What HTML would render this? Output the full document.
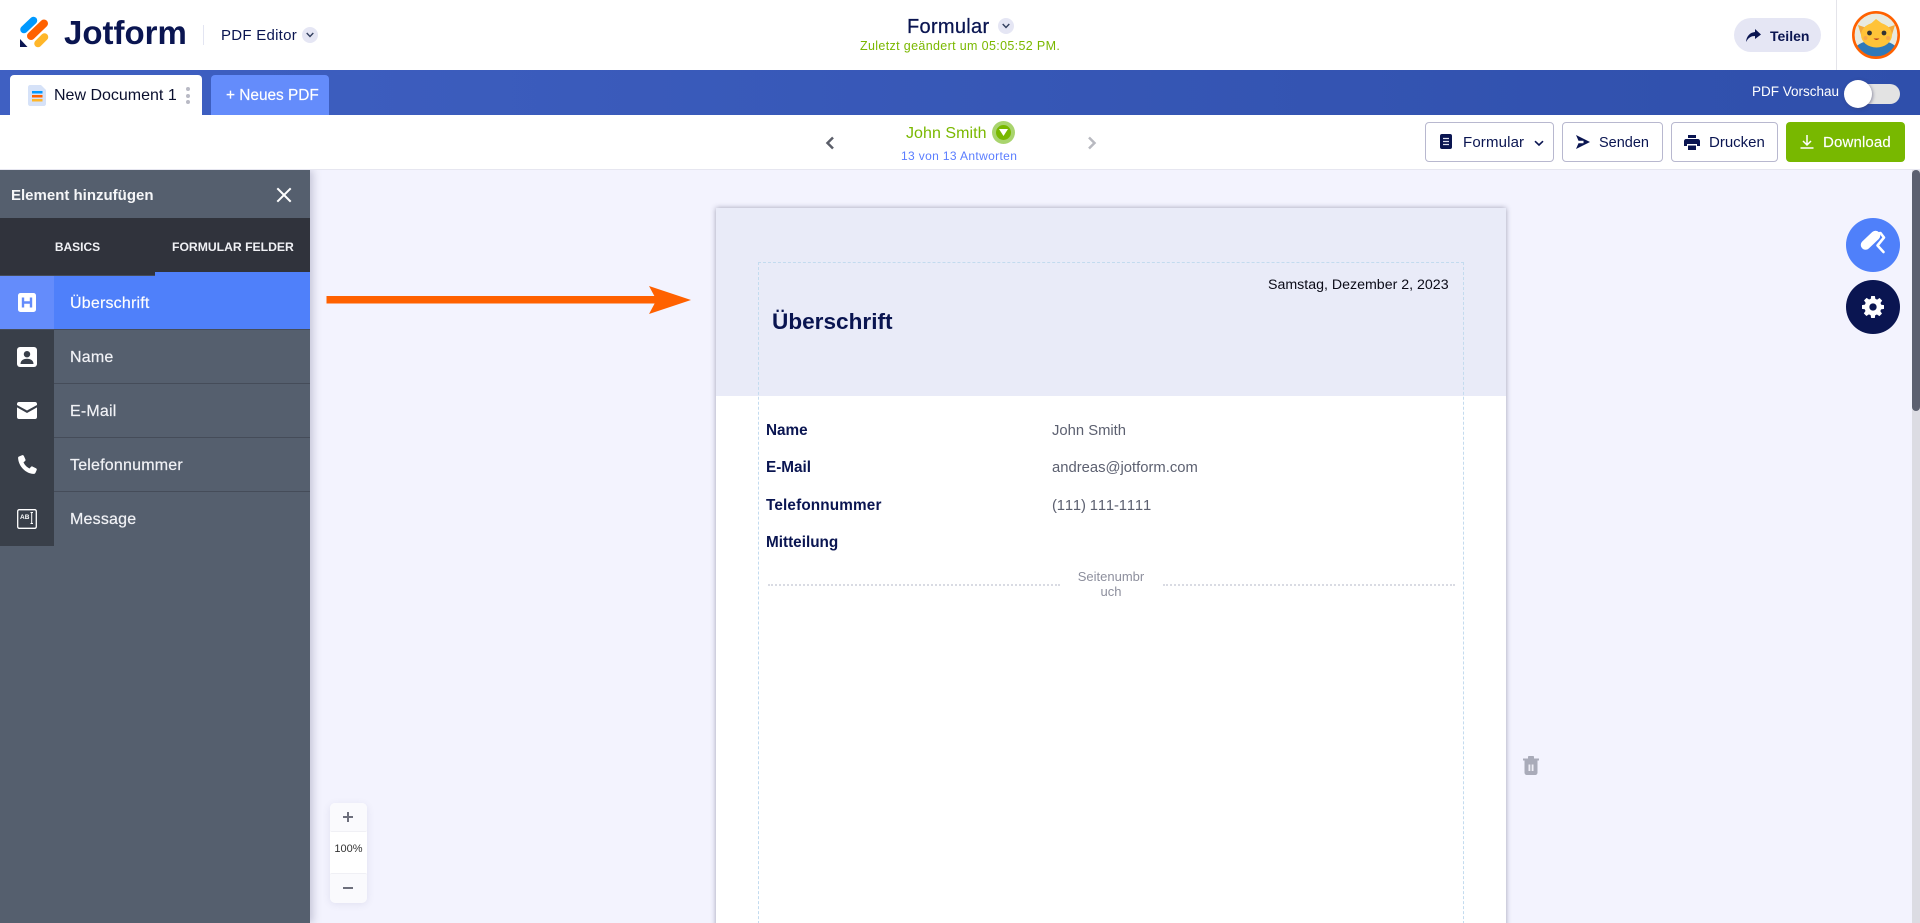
<!DOCTYPE html>
<html lang="de"><head><meta charset="utf-8"><title>Jotform PDF Editor</title>
<style>
html,body{margin:0;padding:0;width:1920px;height:923px;overflow:hidden;background:#f3f3fe;font-family:"Liberation Sans",sans-serif}
#w{position:relative;width:1920px;height:923px;overflow:hidden;background:#f3f3fe}
.a{position:absolute;white-space:nowrap}
.t{position:absolute;white-space:nowrap;line-height:20px;height:20px}
svg{position:absolute;overflow:visible}
.btn{position:absolute;top:122px;height:38px;border:1px solid #b8b8cf;border-radius:4px;background:#fff}
.row{position:absolute;left:0;width:310px;height:53px;background:#555f6e;border-bottom:1px solid #454c59}
.ic{position:absolute;left:0;top:0;width:54px;height:54px;background:#393f49}
.row .t{left:70px;top:18px;font-size:16px;color:#f1f2f6;letter-spacing:.2px;-webkit-text-stroke:.2px #f1f2f6}
.lb{left:766px;font-size:15.3px;font-weight:700;color:#0a1551}
.vl{left:1052px;font-size:14.8px;color:#5c6070}
</style></head><body><div id="w">
<!-- page -->
<div class="a" style="left:716px;top:208px;width:790px;height:730px;background:#fff;box-shadow:0 0 5px rgba(60,60,90,.45)"></div>
<div class="a" style="left:716px;top:208px;width:790px;height:188px;background:#e9ebf8"></div>
<div class="a" style="left:758px;top:262px;width:704px;height:700px;border:1px dashed #c3dbef"></div>
<div class="t" style="left:1268px;top:275px;font-size:14.2px;color:#0b0b18">Samstag, Dezember 2, 2023</div>
<div class="t" style="left:772px;top:311px;font-size:22.6px;font-weight:700;color:#0a1551;line-height:22px">Überschrift</div>
<div class="t lb" style="top:421px">Name</div><div class="t vl" style="top:421px">John Smith</div>
<div class="t lb" style="top:458px">E-Mail</div><div class="t vl" style="top:458px">andreas@jotform.com</div>
<div class="t lb" style="top:496px;letter-spacing:.15px">Telefonnummer</div><div class="t vl" style="top:496px;font-kerning:none;letter-spacing:-.15px">(111) 111-1111</div>
<div class="t lb" style="top:533px">Mitteilung</div>
<div class="a" style="left:768px;top:584px;width:292px;border-top:2px dotted #d9dbe3"></div>
<div class="a" style="left:1163px;top:584px;width:292px;border-top:2px dotted #d9dbe3"></div>
<div class="t" style="left:1061px;width:100px;top:567px;text-align:center;font-size:13px;color:#8d8f9d">Seitenumbr</div>
<div class="t" style="left:1061px;width:100px;top:582px;text-align:center;font-size:13px;color:#8d8f9d">uch</div>
<!-- arrow -->
<svg style="left:326px;top:285px" width="366" height="30" viewBox="0 0 366 30"><rect x="0.5" y="11" width="330" height="7.5" fill="#ff6100"/><path d="M323 1L365 15L323 29L330.500 15Z" fill="#ff6100"/></svg>
<!-- trash -->
<svg style="left:1523px;top:756px" width="16" height="19" viewBox="0 0 16 19"><path d="M0 2.500H5V.8C5 .3 5.500 0 6 0H10C10.500 0 11 .3 11 .8V2.500H16V4.500H0Z" fill="#a9abb9"/><path d="M1.500 4.500H14.500V16.500C14.500 18 13.500 19 12 19H4C2.500 19 1.500 18 1.500 16.500Z" fill="#a9abb9"/><rect x="5.500" y="8.500" width="1.800" height="6.500" fill="#eeeef6"/><rect x="8.700" y="8.500" width="1.800" height="6.500" fill="#eeeef6"/></svg>
<!-- fabs -->
<div class="a" style="left:1846px;top:218px;width:54px;height:54px;border-radius:50%;background:#4f80fa"></div>
<svg style="left:0;top:0" width="1920" height="923" viewBox="0 0 1920 923"><path d="M1865.500 245L1875.500 235.500" stroke="#fff" stroke-width="9.500" stroke-linecap="round"/><path d="M1878 233.500L1880.500 233L1884 237.500L1877.500 245.500L1883.500 252" fill="none" stroke="#fff" stroke-width="2.600" stroke-linecap="round" stroke-linejoin="round"/></svg>
<div class="a" style="left:1846px;top:280px;width:54px;height:54px;border-radius:50%;background:#0a1551"></div>
<svg style="left:1862px;top:296px" width="22" height="22" viewBox="0 0 24 24"><path fill="#fff" fill-rule="evenodd" d="M10 0h4l.6 3.200 1.900.8 2.700-1.800 2.800 2.800-1.800 2.700.8 1.900L24 10v4l-3.200.6-.8 1.900 1.800 2.700-2.800 2.800-2.700-1.800-1.900.8L14 24h-4l-.6-3.200-1.900-.8-2.700 1.800-2.800-2.800 1.800-2.700-.8-1.900L0 14v-4l3.200-.6.8-1.900-1.800-2.700 2.800-2.800 2.700 1.800 1.900-.8zM12 8a4 4 0 1 0 0 8 4 4 0 0 0 0-8z"/></svg>
<!-- scrollbar -->
<div class="a" style="left:1912px;top:170px;width:8px;height:753px;background:#dcdce3"></div>
<div class="a" style="left:1912px;top:170px;width:8px;height:241px;background:#5c6070;border-radius:4px"></div>
<!-- zoom -->
<div class="a" style="left:330px;top:803px;width:37px;height:99px;background:#fff;border-radius:5px;box-shadow:0 2px 8px rgba(80,80,130,.12)"></div>
<div class="a" style="left:330px;top:803px;width:37px;height:28px;background:#fafafd;border-radius:5px 5px 2px 2px;border-bottom:1px solid #f0f0f5"></div>
<div class="a" style="left:330px;top:873px;width:37px;height:29px;background:#fafafd;border-radius:2px 2px 5px 5px;border-top:1px solid #f0f0f5"></div>
<div class="a" style="left:343px;top:816px;width:10px;height:2px;background:#6d6f7c"></div><div class="a" style="left:347px;top:812px;width:2px;height:10px;background:#6d6f7c"></div>
<div class="a" style="left:343px;top:887px;width:10px;height:2px;background:#6d6f7c"></div>
<div class="t" style="left:330px;width:37px;top:839px;text-align:center;font-size:11px;color:#333">100%</div>
<!-- sidebar -->
<div class="a" style="left:0;top:170px;width:310px;height:753px;background:#555f6e;box-shadow:3px 0 8px rgba(60,60,100,.25)"></div>
<div class="t" style="left:11px;top:186px;font-size:15px;font-weight:700;color:#f5f6f8">Element hinzufügen</div>
<svg style="left:277px;top:188px" width="14" height="14" viewBox="0 0 14 14"><path d="M1 1L13 13M13 1L1 13" stroke="#fff" stroke-width="2" stroke-linecap="square"/></svg>
<div class="a" style="left:0;top:218px;width:310px;height:54px;background:#30333c"></div>
<div class="a" style="left:0;top:272px;width:155px;height:4px;background:#30333c;border-bottom:1px solid #454c59;box-sizing:border-box"></div>
<div class="a" style="left:155px;top:272px;width:155px;height:4px;background:#4f80fa"></div>
<div class="t" style="left:0;width:155px;top:237px;text-align:center;font-size:12px;font-weight:700;color:#f0f1f5">BASICS</div>
<div class="t" style="left:172px;top:237px;font-size:12.2px;font-weight:700;color:#f0f1f5">FORMULAR FELDER</div>
<div class="row" style="top:276px;background:#4f80fa"><div class="ic" style="background:#648cfb;height:53px"></div><div class="t" style="color:#fff">Überschrift</div>
<svg style="left:18px;top:17px" width="18" height="19" viewBox="0 0 18 19"><rect width="18" height="19" rx="2.500" fill="#fff"/><path d="M5 4.500V14.500M13 4.500V14.500M5 9.500H13" stroke="#648cfb" stroke-width="2.400" fill="none"/></svg></div>
<div class="row" style="top:330px"><div class="ic"></div><div class="t">Name</div>
<svg style="left:17px;top:17px" width="20" height="20" viewBox="0 0 20 20"><rect width="20" height="20" rx="3" fill="#fff"/><circle cx="10" cy="7.200" r="3.200" fill="#393f49"/><path d="M3.500 17C3.500 13.200 7 11.800 10 11.800S16.500 13.200 16.500 17Z" fill="#393f49"/></svg></div>
<div class="row" style="top:384px"><div class="ic"></div><div class="t">E-Mail</div>
<svg style="left:17px;top:18px" width="20" height="17" viewBox="0 0 20 17"><path d="M2 0H18C19.200 0 20 .8 20 2V3L10 8.500L0 3V2C0 .8.8 0 2 0Z" fill="#fff"/><path d="M0 5.400L10 11L20 5.400V15C20 16.200 19.200 17 18 17H2C.8 17 0 16.200 0 15Z" fill="#fff"/></svg></div>
<div class="row" style="top:438px"><div class="ic"></div><div class="t">Telefonnummer</div>
<svg style="left:18px;top:17px" width="19" height="19" viewBox="0 0 19 19"><path d="M1 1.500L4 0.300C4.800 0 5.500 .3 5.900 1L7.400 4.400C7.700 5 7.500 5.700 7 6.100L5.500 7.300C6.500 9.800 8.700 12.200 11.500 13.500L12.900 11.900C13.300 11.400 14 11.300 14.600 11.600L18 13.200C18.700 13.600 19 14.300 18.700 15L17.500 17.700C17.100 18.600 16.300 19 15.300 18.900C7.500 18.300 .7 11.300 .1 3.200C0 2.400 .3 1.800 1 1.500Z" fill="#fff"/></svg></div>
<div class="row" style="top:492px;border-bottom:0;height:54px"><div class="ic"></div><div class="t">Message</div>
<svg style="left:17px;top:17px" width="20" height="20" viewBox="0 0 20 20"><rect x=".7" y=".7" width="18.600" height="18.600" rx="1.500" fill="none" stroke="#fff" stroke-width="1.300"/><text x="3" y="10" font-size="6.500" font-weight="700" fill="#fff" font-family="Liberation Sans">AB</text><path d="M13.500 3.500H16M14.700 3.500V14.500M13.500 14.500H16" stroke="#fff" stroke-width="1"/></svg></div>
<!-- header -->
<div class="a" style="left:0;top:0;width:1920px;height:70px;background:#fff"></div>
<svg style="left:0;top:0" width="60" height="60" viewBox="0 0 60 60"><path d="M24 29.500L33.500 20.500" stroke="#0099ff" stroke-width="7.500" stroke-linecap="round"/><path d="M31 36L44 23.500" stroke="#ff6100" stroke-width="8" stroke-linecap="round"/><path d="M38 43.500L44.500 37" stroke="#ffb629" stroke-width="7.500" stroke-linecap="round"/><path d="M20 39L27.500 47H20Z" fill="#0a1551"/></svg>
<div class="t" style="left:64px;top:18px;height:30px;line-height:30px;font-size:33px;font-weight:700;color:#0a1551">Jotform</div>
<div class="a" style="left:203px;top:25px;width:1px;height:20px;background:#e3e5f2"></div>
<div class="t" style="left:221px;top:26px;font-size:15px;color:#0a1551;letter-spacing:.26px">PDF Editor</div>
<div class="a" style="left:302px;top:27px;width:16px;height:16px;border-radius:50%;background:#e5e6f4"></div>
<svg style="left:306px;top:32px" width="8" height="6" viewBox="0 0 8 6"><path d="M.7 1L4 4.500L7.300 1" fill="none" stroke="#33405f" stroke-width="1.400"/></svg>
<div class="t" style="left:907px;top:17px;font-size:20px;color:#0a1551;letter-spacing:.3px;-webkit-text-stroke:.25px #0a1551">Formular</div>
<div class="a" style="left:998px;top:18px;width:16px;height:16px;border-radius:50%;background:#e5e6f4"></div>
<svg style="left:1002px;top:23px" width="8" height="6" viewBox="0 0 8 6"><path d="M.7 1L4 4.500L7.300 1" fill="none" stroke="#33405f" stroke-width="1.400"/></svg>
<div class="t" style="left:860px;top:36px;font-size:12.500px;color:#7ab800;letter-spacing:.35px">Zuletzt geändert um 05:05:52 PM.</div>
<div class="a" style="left:1734px;top:18px;width:87px;height:34px;border-radius:17px;background:#e5e6f4"></div>
<svg style="left:1746px;top:29px" width="15" height="13" viewBox="0 0 15 13"><path d="M9 0L15 5.500L9 10V7C5 7 2.500 8.500 0 13C.5 7 4 3.500 9 3Z" fill="#0a1551"/></svg>
<div class="t" style="left:1770px;top:26px;font-size:14px;font-weight:700;color:#0a1551">Teilen</div>
<div class="a" style="left:1836px;top:0;width:1px;height:70px;background:#e4e4ea"></div>
<svg style="left:1852px;top:11px" width="48" height="48" viewBox="0 0 48 48"><circle cx="24" cy="24" r="22.500" fill="#e8eadf"/><path d="M4 36C8 31 15 30 24 30S40 31 44 36C40 42.500 32 46 24 46S8 42.500 4 36Z" fill="#2f79b9"/><path d="M6 14L15 17L10 27Z M43 14L34 17L39 27Z" fill="#f2a93a"/><ellipse cx="24.500" cy="24" rx="15.500" ry="12.500" fill="#ffc338"/><path d="M19 12.500L24 8L30 12.500Z" fill="#ffc338"/><circle cx="17.500" cy="22" r="2.400" fill="#333"/><circle cx="32" cy="22" r="2.400" fill="#333"/><circle cx="13.500" cy="27" r="2" fill="#f7a94a"/><circle cx="36" cy="27" r="2" fill="#f7a94a"/><path d="M21.500 27.500Q24.500 30.500 27.500 27.500" fill="#b03020"/><circle cx="24" cy="24" r="22.700" fill="none" stroke="#ff6100" stroke-width="2.600"/></svg>
<!-- tabbar -->
<div class="a" style="left:0;top:70px;width:1920px;height:45px;background:linear-gradient(90deg,#3f60c2,#2f4fab)"></div>
<div class="a" style="left:10px;top:75px;width:192px;height:40px;background:#fff;border-radius:4px 4px 0 0"></div>
<svg style="left:28px;top:85px" width="18" height="21" viewBox="0 0 18 21"><path d="M2 0H13L18 5V19C18 20 17 21 16 21H2C1 21 0 20 0 19V2C0 1 1 0 2 0Z" fill="#d6e2f8"/><rect x="4" y="6" width="10.500" height="2.500" fill="#0099ff"/><rect x="4" y="10" width="10.500" height="2.500" fill="#ff6100"/><rect x="4" y="14" width="10.500" height="2.500" fill="#ffb629"/></svg>
<div class="t" style="left:54px;top:86px;font-size:16px;color:#0a0f2e">New Document 1</div>
<div class="a" style="left:186px;top:87px;width:4px;height:4px;border-radius:50%;background:#b9bac5"></div><div class="a" style="left:186px;top:94px;width:4px;height:4px;border-radius:50%;background:#b9bac5"></div><div class="a" style="left:186px;top:100px;width:4px;height:4px;border-radius:50%;background:#b9bac5"></div>
<div class="a" style="left:211px;top:75px;width:118px;height:40px;background:#648cfb;border-radius:4px 4px 0 0"></div>
<div class="t" style="left:226px;top:86px;font-size:15.400px;color:#fff;-webkit-text-stroke:.15px #fff">+ Neues PDF</div>
<div class="t" style="left:1752px;top:82px;font-size:13.500px;color:#fff">PDF Vorschau</div>
<div class="a" style="left:1845px;top:84px;width:55px;height:20px;border-radius:10px;background:#e3e3e3"></div>
<div class="a" style="left:1844px;top:80px;width:28px;height:28px;border-radius:50%;background:#fff;box-shadow:1px 1px 3px rgba(60,60,100,.5)"></div>
<!-- toolbar -->
<div class="a" style="left:0;top:115px;width:1920px;height:54px;background:#fff;border-bottom:1px solid #e6e6f0"></div>
<svg style="left:824px;top:136px" width="12" height="14" viewBox="0 0 12 14"><path d="M9 1.500L3.500 7L9 12.500" fill="none" stroke="#5b5e69" stroke-width="2.500"/></svg>
<svg style="left:1086px;top:136px" width="12" height="14" viewBox="0 0 12 14"><path d="M3 1.500L8.500 7L3 12.500" fill="none" stroke="#b8b9c0" stroke-width="2.500"/></svg>
<div class="t" style="left:906px;top:124px;font-size:16px;color:#7ab800;letter-spacing:.05px">John Smith</div>
<div class="a" style="left:992px;top:121px;width:23px;height:23px;border-radius:50%;background:#a9d46e"></div>
<div class="a" style="left:996px;top:125px;width:15px;height:15px;border-radius:50%;background:#78b800"></div>
<svg style="left:999px;top:129px" width="9" height="8" viewBox="0 0 9 8"><path d="M0 0H9L4.500 7Z" fill="#fff"/></svg>
<div class="t" style="left:901px;top:146px;font-size:12px;color:#5a7dff;letter-spacing:.36px">13 von 13 Antworten</div>
<div class="btn" style="left:1425px;width:127px"></div>
<svg style="left:1440px;top:134px" width="12" height="15" viewBox="0 0 12 15"><rect width="12" height="15" rx="2" fill="#0a1551"/><path d="M3 4.500H9M3 7.500H9M3 10.500H9" stroke="#dfe2ef" stroke-width="1.300"/></svg>
<div class="t" style="left:1463px;top:133px;font-size:15px;color:#0a1551;letter-spacing:.15px">Formular</div>
<svg style="left:1534px;top:140px" width="10" height="7" viewBox="0 0 10 7"><path d="M1 1.200L5 5L9 1.200" fill="none" stroke="#0a1551" stroke-width="1.600"/></svg>
<div class="btn" style="left:1562px;width:99px"></div>
<svg style="left:1576px;top:135px" width="14" height="14" viewBox="0 0 14 14"><path d="M0 0L14 7L0 14L2.500 8.300H7.500V5.700H2.500Z" fill="#0a1551"/></svg>
<div class="t" style="left:1599px;top:133px;font-size:14.500px;color:#0a1551">Senden</div>
<div class="btn" style="left:1671px;width:105px"></div>
<svg style="left:1684px;top:135px" width="16" height="15" viewBox="0 0 16 15"><path d="M4 0H12V3H4Z" fill="#0a1551"/><path d="M2 4H14C15 4 16 5 16 6V11H13V9H3V11H0V6C0 5 1 4 2 4Z" fill="#0a1551"/><rect x="4" y="10.500" width="8" height="4.500" fill="#0a1551"/></svg>
<div class="t" style="left:1709px;top:133px;font-size:15px;color:#0a1551">Drucken</div>
<div class="a" style="left:1786px;top:122px;width:119px;height:40px;background:#78b800;border-radius:4px"></div>
<svg style="left:1800px;top:135px" width="14" height="14" viewBox="0 0 14 14"><path d="M7 0V9.500M3 6L7 10L11 6M0.500 13H13.500" fill="none" stroke="#fff" stroke-width="1.500"/></svg>
<div class="t" style="left:1823px;top:133px;font-size:15px;color:#fff;letter-spacing:.15px;-webkit-text-stroke:.15px #fff">Download</div>
</div></body></html>
